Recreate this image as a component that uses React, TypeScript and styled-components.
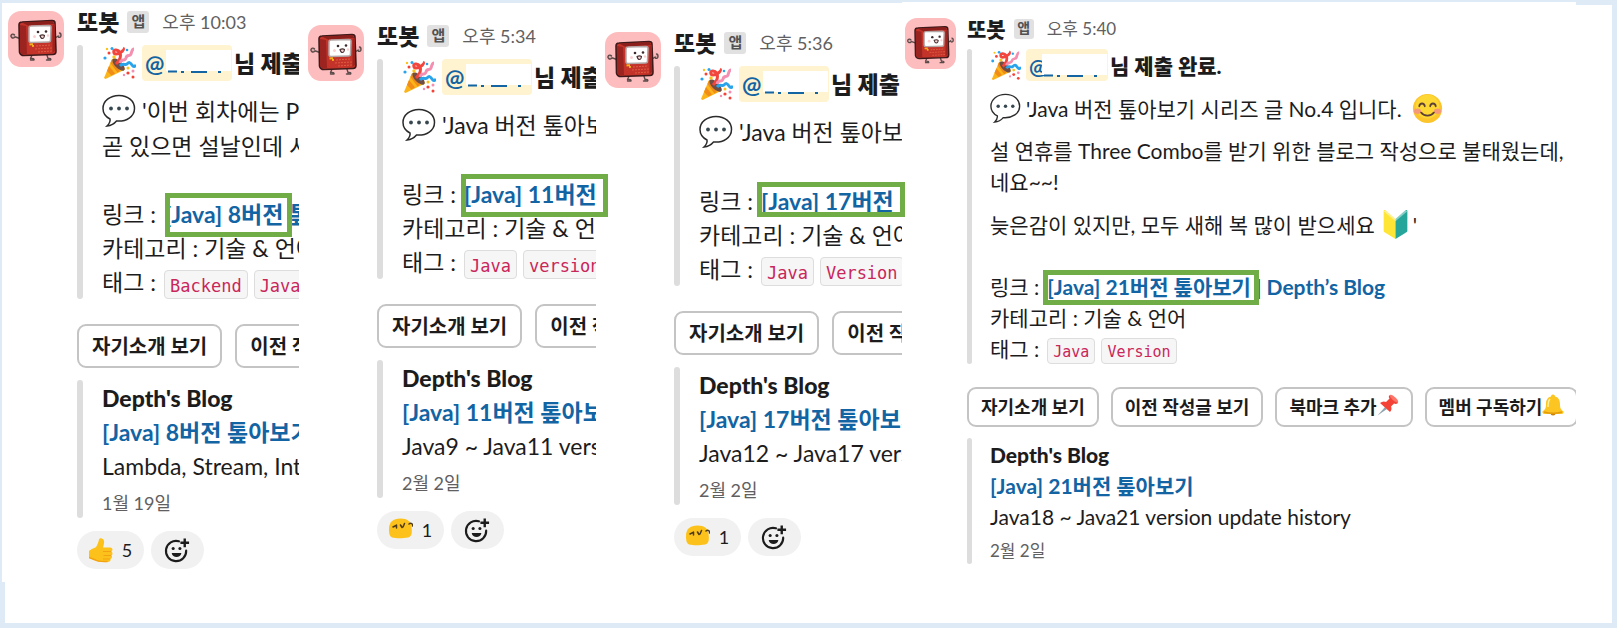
import React from "react";
import styled, { createGlobalStyle, css } from "styled-components";

type Size = "regular" | "compact";

const scale = {
  regular: {
    avatar: 56, radius: 13, gutter: 13, head: 22, headGap: 12, body: 23, line: 34, tall: 36,
    small: 18, badge: 15, badgeBox: 22, code: 17, codeBox: 29, bar: 6, indent: 19, emoji: 34, para: 12,
    button: 20, buttonBox: 44, buttonPad: 13, buttonGap: 13, sectionGap: 25, stackGap: 12,
    mention: 90, space: 6,
  },
  compact: {
    avatar: 51, radius: 12, gutter: 11, head: 21, headGap: 10, body: 21, line: 31, tall: 32,
    small: 17, badge: 14, badgeBox: 20, code: 15, codeBox: 26, bar: 5, indent: 18, emoji: 31, para: 11,
    button: 18, buttonBox: 40, buttonPad: 12, buttonGap: 12, sectionGap: 23, stackGap: 11,
    mention: 82, space: 5,
  },
};

const Global = createGlobalStyle`
  *, *::before, *::after { box-sizing: border-box; }
  body {
    margin: 0;
    font-family: Lato, "Noto Sans CJK KR", sans-serif;
    color: #1d1c1d;
    background: #deebf7;
  }
  p, h2, h3 { margin: 0; font: inherit; }
  svg { display: block; flex: none; }
`;

const Page = styled.main`
  min-height: 100vh;
  border: 5px solid #deebf7;
  background: #fff;
`;

const Board = styled.div`
  display: grid;
  grid-template-columns: minmax(0, 297fr) minmax(0, 297fr) minmax(0, 306fr) minmax(0, 674fr);
  margin: -2px 36px 0 -3px;
  background: #fff;
`;

const Panel = styled.section<{ $size: Size; $top: number; $left: number; $raise?: boolean }>`
  --avatar: ${(p) => scale[p.$size].avatar}px;
  --radius: ${(p) => scale[p.$size].radius}px;
  --gutter: ${(p) => scale[p.$size].gutter}px;
  --head: ${(p) => scale[p.$size].head}px;
  --head-gap: ${(p) => scale[p.$size].headGap}px;
  --body: ${(p) => scale[p.$size].body}px;
  --line: ${(p) => scale[p.$size].line}px;
  --tall: ${(p) => scale[p.$size].tall}px;
  --small: ${(p) => scale[p.$size].small}px;
  --badge: ${(p) => scale[p.$size].badge}px;
  --badge-box: ${(p) => scale[p.$size].badgeBox}px;
  --code: ${(p) => scale[p.$size].code}px;
  --code-box: ${(p) => scale[p.$size].codeBox}px;
  --bar: ${(p) => scale[p.$size].bar}px;
  --indent: ${(p) => scale[p.$size].indent}px;
  --emoji: ${(p) => scale[p.$size].emoji}px;
  --para: ${(p) => scale[p.$size].para}px;
  --button: ${(p) => scale[p.$size].button}px;
  --button-box: ${(p) => scale[p.$size].buttonBox}px;
  --button-pad: ${(p) => scale[p.$size].buttonPad}px;
  --button-gap: ${(p) => scale[p.$size].buttonGap}px;
  --section-gap: ${(p) => scale[p.$size].sectionGap}px;
  --stack-gap: ${(p) => scale[p.$size].stackGap}px;
  --mention: ${(p) => scale[p.$size].mention}px;
  --space: ${(p) => scale[p.$size].space}px;
  position: relative;
  padding: ${(p) => p.$top}px 0 13px ${(p) => p.$left}px;
  background: #fff;
  ${(p) => p.$raise && css`margin-top: -1px;`}
`;

const Message = styled.article`
  display: flex;
  gap: var(--gutter);
  overflow: hidden;
  white-space: nowrap;
  font-size: var(--body);
  line-height: var(--line);
`;

const Avatar = styled.div`
  flex: none;
  width: var(--avatar);
  height: var(--avatar);
  border-radius: var(--radius);
  background: #fdbcbd;
  overflow: hidden;
`;

const Content = styled.div`
  flex: 1;
  min-width: 0;
`;

const Head = styled.header`
  display: flex;
  align-items: center;
  height: var(--head);
  margin-bottom: var(--head-gap);
`;

const Name = styled.h2`
  font-weight: 900;
`;

const Badge = styled.span`
  display: flex;
  align-items: center;
  justify-content: center;
  width: var(--badge-box);
  height: var(--badge-box);
  margin: 0 13px 0 8px;
  padding-bottom: 1px;
  border-radius: 3px;
  background: #e1e1e1;
  color: #525152;
  font-size: var(--badge);
  font-weight: 700;
  line-height: 1;
`;

const Time = styled.time`
  color: #616061;
  font-size: var(--small);
`;

const Attachment = styled.div`
  position: relative;
  padding-left: calc(var(--bar) + var(--indent));
  &::before {
    content: "";
    position: absolute;
    inset: 0 auto 0 0;
    width: var(--bar);
    border-radius: 4px;
    background: #dddddd;
  }
`;

const Body = styled.div`
  display: flex;
  flex-direction: column;
  gap: var(--para);
`;

const EmojiLine = styled.p<{ $bold?: boolean }>`
  display: flex;
  align-items: center;
  height: var(--tall);
  gap: var(--space);
  font-weight: ${(p) => (p.$bold ? 900 : 400)};
  svg { width: var(--emoji); height: var(--emoji); }
`;

const Joined = styled.span`
  display: flex;
  align-items: center;
  gap: 2px;
`;

const MentionTag = styled.span`
  position: relative;
  display: flex;
  align-items: center;
  width: var(--mention);
  height: var(--tall);
  padding-left: 3px;
  border-radius: 4px;
  background: #fff3d0;
  color: #1264a3;
  font-weight: 700;
`;

const Redaction = styled.span`
  position: absolute;
  top: 5px;
  right: 1px;
  width: 65px;
  height: 24px;
  && svg { width: 100%; height: 24px; }
`;

const Meta = styled.div`
  margin-top: var(--line);
`;

const MetaRow = styled.p`
  display: flex;
  align-items: center;
  height: var(--line);
  gap: 8px;
`;

const Tags = styled.span`
  display: flex;
  gap: 6px;
`;

const Link = styled.a`
  color: #1264a3;
  font-weight: 700;
  text-decoration: none;
`;

const Code = styled.code`
  display: inline-flex;
  align-items: center;
  height: var(--code-box);
  margin-top: 4px;
  padding: 3px 5px 0;
  border: 1px solid #dddddd;
  border-radius: 4px;
  background: #f6f6f6;
  color: #c9265a;
  font-family: "DejaVu Sans Mono", monospace;
  font-size: var(--code);
`;

const Actions = styled.div`
  display: flex;
  gap: var(--button-gap);
  margin: var(--section-gap) 0 var(--stack-gap);
`;

const Action = styled.button`
  display: flex;
  align-items: center;
  flex: none;
  height: var(--button-box);
  padding: 0 var(--button-pad) 2px;
  border: 2px solid #c4c4c4;
  border-radius: 9px;
  background: #fff;
  color: #1d1c1d;
  font-family: inherit;
  font-size: var(--button);
  font-weight: 700;
  svg { width: 22px; height: 22px; margin-bottom: 2px; }
`;

const Preview = styled(Attachment)`
  padding-top: 1px;
`;

const Source = styled.h3`
  font-weight: 900;
`;

const Posted = styled.p`
  margin-top: 5px;
  color: #616061;
  font-size: var(--small);
  line-height: calc(var(--line) - 4px);
`;

const Reactions = styled.div`
  display: flex;
  gap: 7px;
  margin-top: 13px;
`;

const Reaction = styled.button<{ $wide?: boolean }>`
  display: flex;
  align-items: center;
  justify-content: center;
  gap: 9px;
  width: ${(p) => (p.$wide ? 67 : 53)}px;
  height: 38px;
  padding: 0;
  border: 0;
  border-radius: 19px;
  background: #f1f1f1;
  color: #1d1c1d;
  font-family: inherit;
  font-size: 18px;
`;

const Highlight = styled.div<{ $x: number; $y: number; $w: number; $h: number }>`
  position: absolute;
  z-index: 2;
  left: ${(p) => p.$x}px;
  top: ${(p) => p.$y}px;
  width: ${(p) => p.$w}px;
  height: ${(p) => p.$h}px;
  border: 5px solid #70ad47;
  pointer-events: none;
`;

const Robot = () => (
  <svg viewBox="0 0 56 56" width="100%" height="100%" fill="none">
    <g stroke="#5b4a4a" strokeWidth="1.4" strokeLinecap="round" strokeLinejoin="round">
      <path d="M12 27.500 6 25.500M47 27l4-2.500" />
      <path d="M6.500 26.500c-2 1.500-4-.5-3.500-2s2.500-2 3.500-.5M50 25.500c1 1.500 3 1 3-1s-1-2.500-1.500-2.500" fill="#d9a9a9" />
      <path d="M24.500 43 22.500 47.500c2-.5 4 .5 3.500 1.500h-3.500M38.500 42.500l1.500 5c2-.5 3.500.5 2.500 1.500h-4" />
    </g>
    <path d="M11 14c0-2 1-3 3-3l30-1.500c2 0 3 .5 3 2.500l1 28c0 2.500-1 3.500-3 3.500l-29 1c-3 0-4-1-4.500-3.500z" fill="#c33329" stroke="#3f1a1a" strokeWidth="1.600" />
    <path d="M12 14 18 15l1 28-3.500.5c-2-.5-3-1-3.500-4z" fill="#9c2420" />
    <path d="m14 11.500 30-1.500 2.500 3L20 14.500z" fill="#8a1f1b" />
    <path d="M44.500 14 47 13v27l-2.500 2z" fill="#9c2420" />
    <path d="M21 17c0-1.500 1-2 2-2l18-.5c1.500 0 2 .5 2 2l-.5 12.500c0 1.500-.5 2-2 2L23 31.500c-1.500 0-2-.5-2-2z" fill="#fff" stroke="#b3a6a6" strokeWidth="1.500" />
    <circle cx="30" cy="21" r="1.300" fill="#3b2b2d" /><circle cx="38" cy="20.500" r="1.300" fill="#3b2b2d" />
    <path d="M32 24.500c1.500-.7 3.500-.7 4.500 0-.5 4-3.500 4-4.500 0z" fill="#f3d6d6" stroke="#493033" strokeWidth="1.100" />
    <circle cx="26.500" cy="25.500" r="1.500" fill="#fbd0d0" /><circle cx="40" cy="24.500" r="1.200" fill="#fbd0d0" />
    <path d="m21.500 33.500 3.500-.3M24 35l2-.2" stroke="#f2b21b" strokeWidth="1.800" />
    <path d="m28 35 15-1M27 38l17-1M30 41l14-1" stroke="#df5b42" strokeWidth="1" strokeDasharray="2 1" />
  </svg>
);

const Popper = () => (
  <svg viewBox="0 0 34 34">
    <path d="M10 13 2 32l1.500 1L23 23.500C22 19 15 13 10 13z" fill="#fbb41a" />
    <path d="m7 20 6 7.500-3.500 2L5 25zM9.500 14l8.500 11-2.500 1.500L8.500 17z" fill="#f08c17" />
    <ellipse cx="16.500" cy="18.500" rx="8" ry="3.600" transform="rotate(45 16.500 18.500)" fill="#704d45" />
    <path d="M14 18C20 12 20 5 14 4c-3-.5-3 4 0 4 5 0 9-5 7-6" fill="none" stroke="#f2453d" strokeWidth="3" />
    <path d="M18 17c1-5 5-1 6-5s4-1 5-4 1-5 3-5" fill="none" stroke="#f48fb1" strokeWidth="3" />
    <path d="M18 20c3-4 5 0 7-2s3-2 5 1 3 1 4 0" fill="none" stroke="#29a3ea" strokeWidth="3" />
    <g fill="#f44336"><circle cx="7" cy="7" r="1.500" /><circle cx="26" cy="27" r="1.600" /><circle cx="31" cy="31" r="1.500" /></g>
    <g fill="#29a3ea"><circle cx="3" cy="12" r="1.600" /><circle cx="10" cy="2.500" r="1.500" /><circle cx="25" cy="4" r="1.300" /></g>
    <g fill="#fcc21b"><circle cx="12" cy="11" r="1.700" /><circle cx="5" cy="3" r="1.200" /><circle cx="26" cy="22" r="1.500" /></g>
    <g fill="#f48fb1"><circle cx="31" cy="25" r="1.500" /><circle cx="22" cy="29" r="1.200" /></g>
  </svg>
);

const Bubble = () => (
  <svg viewBox="0 0 34 34">
    <path d="M17 1.500C8 1.500 1 7 1 14.500c0 5 3 8.500 7 10.500.5 2.500-1 5-3 7 4-.5 7.500-2.500 9.500-5 10 .8 18-4.500 18-12.500C32.500 7 26 1.500 17 1.500z" fill="#fff" stroke="#2b2b2b" strokeWidth="1.500" />
    <g fill="#37474f"><circle cx="9" cy="14.500" r="1.900" /><circle cx="17" cy="14.500" r="1.900" /><circle cx="25" cy="14.500" r="1.900" /></g>
  </svg>
);

const Smile = () => (
  <svg viewBox="0 0 34 34">
    <circle cx="17" cy="17" r="16" fill="#fcc52c" /><circle cx="17" cy="15" r="13" fill="#fdd835" />
    <g fill="#f59a78"><ellipse cx="6" cy="20" rx="4" ry="3" /><ellipse cx="28" cy="20" rx="4" ry="3" /></g>
    <path d="M8 14.500c.5-4 5.500-4 6 0M20 14.500c.5-4 5.500-4 6 0M10 21.500c3 4.500 11 4.500 14 0" fill="none" stroke="#5d4037" strokeWidth="2" strokeLinecap="round" />
  </svg>
);

const Beginner = () => (
  <svg viewBox="0 0 34 34">
    <path d="M4 2.500c0-1.500 1-1.500 2-1L17 11v22L5 25.500c-.8-.5-1-1-1-2z" fill="#ffe636" />
    <path d="M30 2.500c0-1.500-1-1.500-2-1L17 11v22l12-7.500c.8-.5 1-1 1-2z" fill="#26a69a" />
    <path d="m5 2 12 10L29 2" fill="none" stroke="#fff" strokeOpacity=".45" strokeWidth="2" />
  </svg>
);

const Pin = () => (
  <svg viewBox="0 0 22 22">
    <path d="m8 13-7.500 8.500L10 15z" fill="#90a4ae" />
    <path d="m13 1 8 7.500c-1 2-3 1.500-4 1l-3 3c1 2 .5 4-1 5.500L3 9c2-1.500 4-2 6-1l3.500-3.500C11.500 3 11.500 2 13 1z" fill="#f44336" />
    <path d="M13 1c2-1.500 9.500 5.500 8 7.500-2 1-9-5-8-7.500z" fill="#ff7569" />
  </svg>
);

const Bell = () => (
  <svg viewBox="0 0 22 22">
    <circle cx="11" cy="19" r="2.500" fill="#c98209" />
    <path d="M11 .5c1.500 0 2 1 2 2 4 1 5 4 5 8s1 5 3.500 7c.5 1-.5 2.500-2 2.500h-17C1 20 0 18.500.5 17.500 3 15.500 4 14.500 4 10.500s1-7 5-8c0-1 .5-2 2-2z" fill="#fcc521" />
    <path d="M2 18c5 1.500 13 1.500 18 0" fill="none" stroke="#e39b0c" strokeWidth="1.500" />
    <path d="M8 5c-2 2-2 5-2 8" fill="none" stroke="#fff0a0" strokeWidth="1.500" />
  </svg>
);

const Thumb = () => (
  <svg viewBox="0 0 24 25" width="24" height="25">
    <path d="M0 13c1-1.500 6-3 7-4s2.500-5 3-7.500C10.500-.5 14.500 0 15 3c.4 2.500-.7 5-1 6.500h7c3 0 3 3 1.500 4 1.500 1 1 3.500 0 4 1 1 .5 3-1 3.500.5 1.500-.5 3-3 3-4 0-9 .5-12-1.500L0 20z" fill="#fcc21b" />
    <path d="M14 13.500h8M14.500 17.500h7.500M14 21h7" stroke="#f2a313" strokeWidth="1" />
    <path d="M0 19.500 6.500 22c3 2 8 1.500 12 1.500" fill="none" stroke="#f2a313" strokeWidth="1.500" />
  </svg>
);

const Blob = () => (
  <svg viewBox="0 0 24 25" width="24" height="25">
    <path d="M0 11C0 4 4 .5 11.500.5c7 0 10.500 3 11 8 .5 5 1 10-3.500 11-5 1-12 1-16 0C0 18 0 14 0 11z" fill="#fcc21b" />
    <path d="m4 9 3-1.500M7.500 7v3M11.500 7l1.500 2.500M15.500 5.500 14 9M20 6c2-1.500 4 0 3.500 2" fill="none" stroke="#4e3b1d" strokeWidth="1.500" strokeLinecap="round" />
  </svg>
);

const AddReaction = () => (
  <svg viewBox="0 0 28 28" width="27" height="27" fill="none" stroke="#1d1c1d">
    <path d="M15.500 4.500A10.500 10.500 0 1 0 23 14" strokeWidth="2.200" strokeLinecap="round" />
    <path d="M21.500 1.500v9M17 6h9" strokeWidth="2.500" />
    <circle cx="9.500" cy="12" r="1.600" fill="#1d1c1d" stroke="none" /><circle cx="16.500" cy="12" r="1.600" fill="#1d1c1d" stroke="none" />
    <path d="M8 16.500h10c-.5 5.500-9.500 5.500-10 0z" fill="#1d1c1d" stroke="none" />
  </svg>
);

const Mention = () => (
  <MentionTag>
    @
    <Redaction>
      <svg viewBox="0 0 65 24" preserveAspectRatio="none">
        <path d="M0 0h65v21H0z" fill="#fff" />
        <path d="M2 21.500h9M15 22h3M25 22h16M52 22h3" stroke="#1264a3" strokeWidth="2" />
      </svg>
    </Redaction>
  </MentionTag>
);

type CardProps = {
  time: string;
  status: string;
  children: React.ReactNode;
  link: string;
  tags: string[];
  actions: React.ReactNode[];
  title: string;
  description: string;
  date: string;
  reaction?: { icon: React.ReactNode; count: number };
};

const Card = (p: CardProps) => (
  <Message>
    <Avatar><Robot /></Avatar>
    <Content>
      <Head>
        <Name>또봇</Name>
        <Badge>앱</Badge>
        <Time>{p.time}</Time>
      </Head>
      <Attachment>
        <Body>
          <EmojiLine $bold>
            <Popper />
            <Joined><Mention />{p.status}</Joined>
          </EmojiLine>
          {p.children}
        </Body>
        <Meta>
          <MetaRow>링크 : <Link href="#post">{p.link}</Link></MetaRow>
          <MetaRow>카테고리 : 기술 &amp; 언어</MetaRow>
          <MetaRow>태그 : <Tags>{p.tags.map((t) => <Code key={t}>{t}</Code>)}</Tags></MetaRow>
        </Meta>
      </Attachment>
      <Actions>
        {p.actions.map((a, i) => <Action key={i} type="button">{a}</Action>)}
      </Actions>
      <Preview>
        <Source>Depth's Blog</Source>
        <p><Link href="#post">{p.title}</Link></p>
        <p>{p.description}</p>
        <Posted>{p.date}</Posted>
      </Preview>
      {p.reaction && (
        <Reactions>
          <Reaction type="button" $wide>{p.reaction.icon}{p.reaction.count}</Reaction>
          <Reaction type="button" aria-label="반응 추가"><AddReaction /></Reaction>
        </Reactions>
      )}
    </Content>
  </Message>
);

const shortActions = ["자기소개 보기", "이전 작성글 보기"];

export default function App() {
  return (
    <>
      <Global />
      <Page>
        <Board>
          <Panel $size="regular" $top={8} $left={6}>
            <Card
              time="오후 10:03" status="님 제출 완료." link="[Java] 8버전 톺아보기" tags={["Backend", "Java"]}
              actions={shortActions} title="[Java] 8버전 톺아보기" description="Lambda, Stream, Interface"
              date="1월 19일" reaction={{ icon: <Thumb />, count: 5 }}
            >
              <div>
                <EmojiLine><Bubble />'이번 회차에는 P</EmojiLine>
                <p>곧 있으면 설날인데 시</p>
              </div>
            </Card>
            <Highlight $x={163} $y={190} $w={127} $h={44} />
          </Panel>
          <Panel $size="regular" $top={22} $left={9}>
            <Card
              time="오후 5:34" status="님 제출 완료." link="[Java] 11버전 톺아보기" tags={["Java", "version"]}
              actions={shortActions} title="[Java] 11버전 톺아보기" description="Java9 ~ Java11 version update history"
              date="2월 2일" reaction={{ icon: <Blob />, count: 1 }}
            >
              <EmojiLine><Bubble />'Java 버전 톺아보기</EmojiLine>
            </Card>
            <Highlight $x={162} $y={171} $w={147} $h={43} />
          </Panel>
          <Panel $size="regular" $top={29} $left={9}>
            <Card
              time="오후 5:36" status="님 제출 완료." link="[Java] 17버전 톺아보기" tags={["Java", "Version"]}
              actions={shortActions} title="[Java] 17버전 톺아보기" description="Java12 ~ Java17 version update history"
              date="2월 2일" reaction={{ icon: <Blob />, count: 1 }}
            >
              <EmojiLine><Bubble />'Java 버전 톺아보기</EmojiLine>
            </Card>
            <Highlight $x={161} $y={179} $w={148} $h={35} />
          </Panel>
          <Panel $size="compact" $top={16} $left={3} $raise>
            <Card
              time="오후 5:40" status="님 제출 완료." link="[Java] 21버전 톺아보기 | Depth’s Blog" tags={["Java", "Version"]}
              actions={[
                "자기소개 보기",
                "이전 작성글 보기",
                <React.Fragment key="pin">북마크 추가<Pin /></React.Fragment>,
                <React.Fragment key="bell">멤버 구독하기<Bell /></React.Fragment>,
              ]}
              title="[Java] 21버전 톺아보기" description="Java18 ~ Java21 version update history"
              date="2월 2일"
            >
              <EmojiLine><Bubble />'Java 버전 톺아보기 시리즈 글 No.4 입니다.{"\u00a0"}<Smile /></EmojiLine>
              <p>설 연휴를 Three Combo를 받기 위한 블로그 작성으로 불태웠는데,<br />네요~~!</p>
              <EmojiLine>늦은감이 있지만, 모두 새해 복 많이 받으세요<Joined><Beginner />'</Joined></EmojiLine>
            </Card>
            <Highlight $x={141} $y={268} $w={216} $h={35} />
          </Panel>
        </Board>
      </Page>
    </>
  );
}
